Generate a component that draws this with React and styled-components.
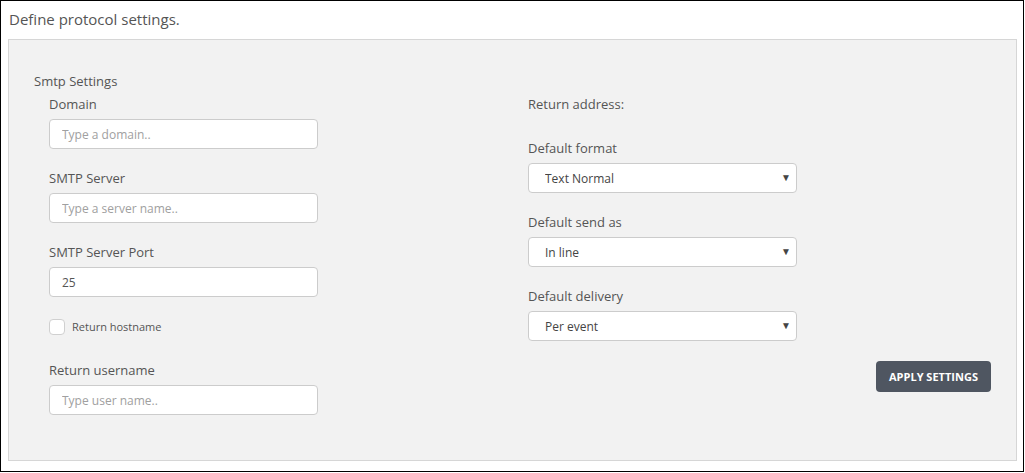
import React, { useState } from "react";
import styled, { createGlobalStyle } from "styled-components";

const GlobalStyle = createGlobalStyle`
  html, body {
    margin: 0;
    padding: 0;
    background: #ffffff;
  }
  body {
    font-family: "Open Sans", "Liberation Sans", Arial, sans-serif;
    color: #555;
  }
  * {
    box-sizing: border-box;
  }
`;

const leftFields = [
  { id: "domain", label: "Domain", placeholder: "Type a domain.." },
  { id: "server", label: "SMTP Server", placeholder: "Type a server name.." },
  { id: "port", label: "SMTP Server Port", placeholder: "", value: "25" },
];

const selectFields = [
  { id: "format", label: "Default format", options: ["Text Normal", "HTML"] },
  { id: "sendAs", label: "Default send as", options: ["In line", "Attachment"] },
  { id: "delivery", label: "Default delivery", options: ["Per event", "Digest"] },
];

const App = () => {
  const [values, setValues] = useState({ port: "25" });
  const [hostname, setHostname] = useState(false);

  const handleChange = (id) => (e) => setValues({ ...values, [id]: e.target.value });

  return (
    <>
      <GlobalStyle />
      <Frame>
        <Intro>Define protocol settings.</Intro>
        <Panel>
          <SectionTitle>Smtp Settings</SectionTitle>
          <Columns>
            <Column>
              {leftFields.map((field) => (
                <Field key={field.id}>
                  <Label htmlFor={field.id}>{field.label}</Label>
                  <TextInput
                    id={field.id}
                    placeholder={field.placeholder}
                    value={values[field.id] || ""}
                    onChange={handleChange(field.id)}
                  />
                </Field>
              ))}
              <CheckRow>
                <CheckBox
                  type="checkbox"
                  id="hostname"
                  checked={hostname}
                  onChange={() => setHostname(!hostname)}
                />
                <CheckLabel htmlFor="hostname">Return hostname</CheckLabel>
              </CheckRow>
              <Field>
                <Label htmlFor="username">Return username</Label>
                <TextInput
                  id="username"
                  placeholder="Type user name.."
                  value={values.username || ""}
                  onChange={handleChange("username")}
                />
              </Field>
            </Column>

            <WideColumn>
              <AddressLabel>Return address:</AddressLabel>
              {selectFields.map((field) => (
                <Field key={field.id}>
                  <Label htmlFor={field.id}>{field.label}</Label>
                  <SelectWrap>
                    <Select id={field.id} defaultValue={field.options[0]}>
                      {field.options.map((opt) => (
                        <option key={opt}>{opt}</option>
                      ))}
                    </Select>
                    <Caret>▼</Caret>
                  </SelectWrap>
                </Field>
              ))}
              <Actions>
                <ApplyButton>Apply Settings</ApplyButton>
              </Actions>
            </WideColumn>
          </Columns>
        </Panel>
      </Frame>
    </>
  );
};

export default App;

const Frame = styled.div`
  width: 1024px;
  height: 472px;
  border: 1px solid #000;
  padding: 0 7px 0 7px;
  display: flex;
  flex-direction: column;
`;

const Intro = styled.div`
  font-size: 15px;
  line-height: 20px;
  padding: 8px 1px 10px;
  color: #555;
`;

const Panel = styled.div`
  width: 1009px;
  height: 422px;
  background: #f2f2f2;
  border: 1px solid #d6d6d6;
  padding: 32px 24px 0 25px;
`;

const SectionTitle = styled.div`
  font-size: 13px;
  line-height: 18px;
  color: #555;
`;

const Columns = styled.div`
  display: flex;
  gap: 210px;
  padding: 5px 0 0 15px;
`;

const Column = styled.div`
  width: 269px;
  display: flex;
  flex-direction: column;
`;

const WideColumn = styled.div`
  width: 463px;
  display: flex;
  flex-direction: column;
`;

const Field = styled.div`
  display: flex;
  flex-direction: column;
  margin-bottom: 20px;
  width: 269px;
`;

const Label = styled.label`
  font-size: 13px;
  line-height: 18px;
  margin-bottom: 6px;
  color: #555;
`;

const AddressLabel = styled.div`
  font-size: 13px;
  line-height: 18px;
  margin-bottom: 26px;
  color: #555;
`;

const TextInput = styled.input`
  height: 30px;
  width: 100%;
  border: 1px solid #cccccc;
  border-radius: 4px;
  background: #fff;
  padding: 0 12px;
  font-family: "Open Sans", "Liberation Sans", Arial, sans-serif;
  font-size: 12px;
  color: #555;
  outline: none;
  &::placeholder {
    color: #a0a0a0;
  }
`;

const CheckRow = styled.div`
  display: flex;
  align-items: center;
  gap: 7px;
  margin: 2px 0 26px;
  height: 16px;
`;

const CheckBox = styled.input`
  appearance: none;
  margin: 0;
  width: 16px;
  height: 16px;
  border: 1px solid #d0d0d0;
  border-radius: 4px;
  background: #fff;
  &:checked {
    background: #4f5661;
  }
`;

const CheckLabel = styled.label`
  font-size: 11px;
  line-height: 16px;
  color: #555;
`;

const SelectWrap = styled.div`
  position: relative;
  width: 269px;
`;

const Select = styled.select`
  appearance: none;
  width: 100%;
  height: 30px;
  border: 1px solid #cccccc;
  border-radius: 4px;
  background: #fff;
  padding: 0 16px;
  font-family: "Open Sans", "Liberation Sans", Arial, sans-serif;
  font-size: 12px;
  color: #444;
  outline: none;
`;

const Caret = styled.span`
  position: absolute;
  right: 6px;
  top: 8px;
  font-size: 10px;
  line-height: 12px;
  color: #444;
  pointer-events: none;
`;

const Actions = styled.div`
  display: flex;
  justify-content: flex-end;
`;

const ApplyButton = styled.button`
  width: 115px;
  height: 31px;
  border: none;
  border-radius: 4px;
  background: #4f5661;
  color: #fff;
  font-family: "Open Sans", "Liberation Sans", Arial, sans-serif;
  font-weight: 700;
  font-size: 11px;
  text-transform: uppercase;
  cursor: pointer;
`;
